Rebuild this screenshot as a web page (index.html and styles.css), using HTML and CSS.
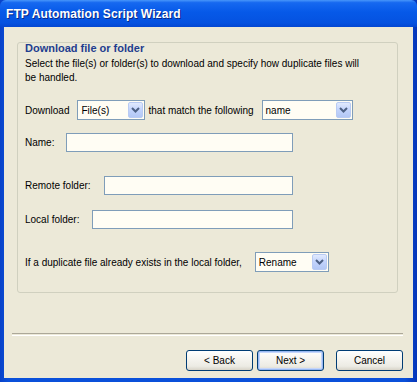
FILE: index.html
```html
<!DOCTYPE html>
<html lang="en">
<head>
    <meta charset="UTF-8">
    <title>FTP Automation Script Wizard</title>
    <link rel="stylesheet" href="styles.css">
</head>
<body>
    <div class="window">
        <div class="titlebar">
            <span class="title">FTP Automation Script Wizard</span>
        </div>
        <div class="client">
            <div class="group">
                <h2>Download file or folder</h2>
                <p class="desc">Select the file(s) or folder(s) to download and specify how duplicate files will<br>be handled.</p>

                <div class="row row-download">
                    <span class="lbl">Download</span>
                    <div class="combo combo-type">
                        <span>File(s)</span>
                        <i class="drop"><svg width="9" height="6" viewBox="0 0 9 6"><path d="M1 1 L4.5 4.5 L8 1" fill="none" stroke="#4d6185" stroke-width="2"/></svg></i>
                    </div>
                    <span class="lbl lbl-match">that match the following</span>
                    <div class="combo combo-match">
                        <span>name</span>
                        <i class="drop"><svg width="9" height="6" viewBox="0 0 9 6"><path d="M1 1 L4.5 4.5 L8 1" fill="none" stroke="#4d6185" stroke-width="2"/></svg></i>
                    </div>
                </div>

                <div class="row row-name">
                    <span class="lbl">Name:</span>
                    <div class="field field-name"></div>
                </div>

                <div class="row row-remote">
                    <span class="lbl">Remote folder:</span>
                    <div class="field field-remote"></div>
                </div>

                <div class="row row-local">
                    <span class="lbl">Local folder:</span>
                    <div class="field field-local"></div>
                </div>

                <div class="row row-dup">
                    <span class="lbl">If a duplicate file already exists in the local folder,</span>
                    <div class="combo combo-dup">
                        <span>Rename</span>
                        <i class="drop"><svg width="9" height="6" viewBox="0 0 9 6"><path d="M1 1 L4.5 4.5 L8 1" fill="none" stroke="#4d6185" stroke-width="2"/></svg></i>
                    </div>
                </div>
            </div>

            <div class="separator"></div>

            <div class="buttons">
                <button class="btn">&lt; Back</button>
                <button class="btn btn-default">Next &gt;</button>
                <button class="btn btn-cancel">Cancel</button>
            </div>
        </div>
    </div>
</body>
</html>
```

FILE: styles.css
```css
body {
    margin: 0;
    padding: 0;
    font-family: 'Liberation Sans', Arial, sans-serif;
    font-size: 10px;
    color: #000;
    background: #ece9d8;
}

.window {
    width: 417px;
    height: 382px;
    display: flex;
    flex-direction: column;
    box-sizing: border-box;
    background: linear-gradient(to right, #0842c9 0%, #0a50da 2%, #0a50da 97%, #0535b8 100%);
}

.titlebar {
    height: 27px;
    display: flex;
    align-items: center;
    padding-left: 6px;
    background: linear-gradient(to bottom, #4896fa 0%, #1668f0 10%, #0659e8 45%, #0552e0 85%, #0447d2 100%);
    border-top-left-radius: 6px;
    border-top-right-radius: 6px;
}

.title {
    color: #fff;
    font-weight: bold;
    font-size: 12px;
    letter-spacing: 0.1px;
    text-shadow: 1px 1px 0 #0a2a86;
    padding-top: 1px;
}

.client {
    flex: 1;
    margin: 0 4px 4px 4px;
    background: #ece9d8;
    display: flex;
    flex-direction: column;
}

.group {
    margin: 15px 15px 0 13px;
    height: 251px;
    box-sizing: border-box;
    border: 1px solid #d0d0bf;
    border-radius: 3px;
    padding: 0 0 0 7px;
}

h2 {
    margin: -1px 0 0 0;
    font-size: 11px;
    line-height: 13px;
    font-weight: bold;
    color: #1f3e8f;
}

.desc {
    margin: 2px 0 0 0;
    line-height: 14px;
}

.row {
    display: flex;
    align-items: center;
    height: 20px;
}

.row-download { margin-top: 15px; }
.row-name { margin-top: 12px; }
.row-remote { margin-top: 23px; }
.row-local { margin-top: 14px; }
.row-dup { margin-top: 23px; }

.lbl {
    white-space: nowrap;
}

.combo {
    height: 20px;
    box-sizing: border-box;
    border: 1px solid #7f9db9;
    background: #fffdf4;
    display: flex;
    align-items: center;
    justify-content: space-between;
    padding: 0 1px 0 3px;
}

.combo-type { width: 68px; margin-left: 8px; }
.combo-match { width: 91px; margin-left: 8px; }
.combo-dup { width: 74px; margin-left: 13px; }

.lbl-match { margin-left: 3px; }

.drop {
    width: 15px;
    height: 16px;
    box-sizing: border-box;
    border: 1px solid #b9cbf3;
    border-radius: 2px;
    background: linear-gradient(to bottom, #e1eafe 0%, #c2d3fc 50%, #b3c8f5 100%);
    display: flex;
    align-items: center;
    justify-content: center;
}

.field {
    height: 19px;
    box-sizing: border-box;
    border: 1px solid #7f9db9;
    background: #fffdf4;
}

.field-name { width: 227px; margin-left: 12px; }
.field-remote { width: 189px; margin-left: 13px; }
.field-local { width: 201px; margin-left: 13px; }

.separator {
    margin: 40px 10px 0 8px;
    height: 1px;
    border-top: 1px solid #aca899;
    border-bottom: 1px solid #fff;
}

.buttons {
    display: flex;
    justify-content: flex-end;
    margin: 14px 10px 0 0;
}

.btn {
    width: 67px;
    height: 21px;
    margin-left: 4px;
    padding: 0;
    font-family: 'Liberation Sans', Arial, sans-serif;
    font-size: 10px;
    color: #000;
    border: 1px solid #003c74;
    border-radius: 3px;
    background: linear-gradient(to bottom, #ffffff 0%, #f6f5f0 40%, #ecebe4 80%, #d8d4c8 100%);
}

.btn-default {
    box-shadow: inset 0 0 0 1px #98b8f2, inset 0 0 0 2px #c5d6fa;
}

.btn-cancel {
    margin-left: 12px;
}
```
